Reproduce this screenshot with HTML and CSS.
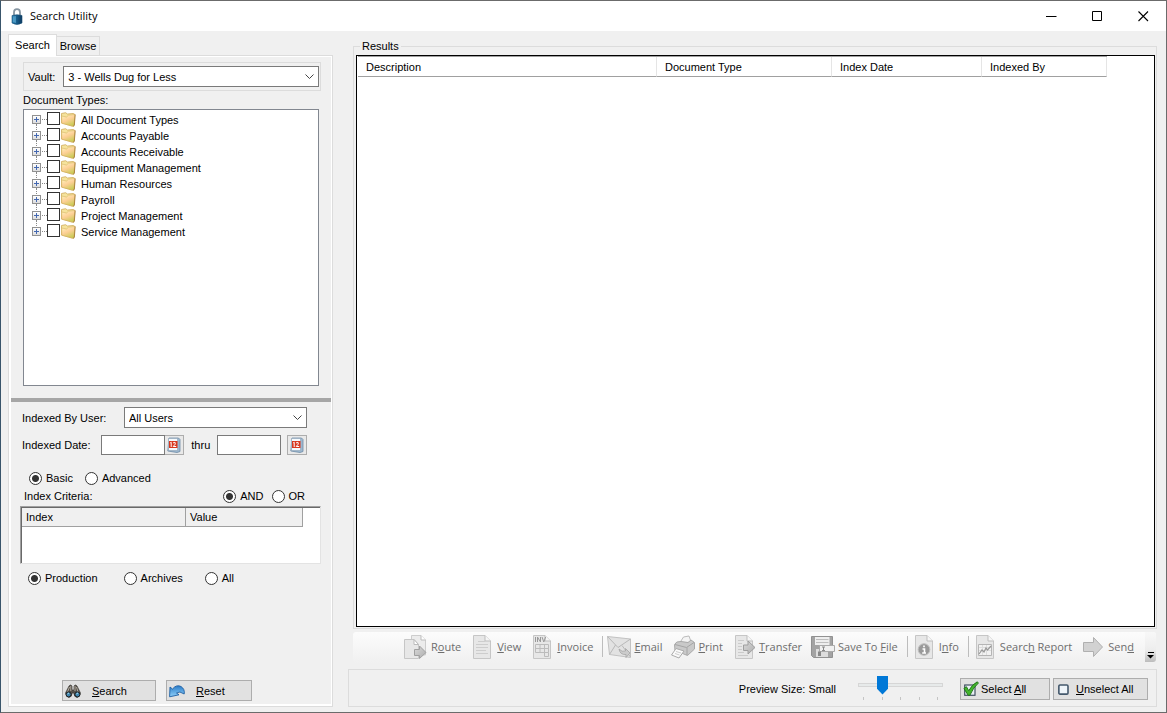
FILE: index.html
```html
<!DOCTYPE html>
<html lang="en">
<head>
<meta charset="utf-8">
<title>Search Utility</title>
<link rel="stylesheet" href="styles.css">
</head>
<body>
<svg class="defs" aria-hidden="true">
  <defs>
    <linearGradient id="g-folder" x1=".1" y1="0" x2=".6" y2="1"><stop offset="0" stop-color="#fff6c0"/><stop offset=".5" stop-color="#fdcf96"/><stop offset="1" stop-color="#c9cc55"/></linearGradient>
    <linearGradient id="g-lock" x1="0" y1="0" x2="1" y2="0"><stop offset="0" stop-color="#2f86b8"/><stop offset=".5" stop-color="#155a88"/><stop offset="1" stop-color="#0e3a60"/></linearGradient>
    <linearGradient id="g-arrow" x1="0" y1="0" x2="0" y2="1"><stop offset="0" stop-color="#2a7cc8"/><stop offset="1" stop-color="#8fd0fa"/></linearGradient>
    <linearGradient id="g-grey" x1="0" y1="0" x2="1" y2="1"><stop offset="0" stop-color="#dadada"/><stop offset="1" stop-color="#adadad"/></linearGradient>
    <symbol id="folder" viewBox="0 0 15 15"><path d="M.5 1.500 4.500.700 6.500 2 12 1.500 13.500 2V12.500L11.500 14.300.5 11Z" fill="#f5e39c" stroke="#c9a04a" stroke-width=".7"/><path d="M.7 4 5.500 5 7.500 3.200 14 2.500 12.800 14.300.7 11.200Z" fill="url(#g-folder)" stroke="#d0aa58" stroke-width=".5"/><path d="M14.200 2.500 13.300 13.500 12 14.300" fill="none" stroke="#a8803c" stroke-width=".9"/></symbol>
    <symbol id="chev" viewBox="0 0 9 6"><path d="M.5.500 4.500 4.500 8.500.500" fill="none" stroke="#444" stroke-width="1"/></symbol>
    <symbol id="cal" viewBox="0 0 14 16"><path d="M2 1H11.500L13 2.500V14.500L10 15.500.8 14Z" fill="#9db8d0" stroke="#6f8ba6" stroke-width=".8"/><path d="M1.500 1.500H10.500V13.500H1.500Z" fill="#f6fafd" stroke="#8aa0b4" stroke-width=".6"/><rect x="2" y="4" width="8.500" height="7" fill="#d8371f"/><path d="M3.200 6 4.200 5.200V10M6 6.200Q7 4.800 8.200 5.600 9.200 6.800 6.200 9.500H9.200" fill="none" stroke="#fff"/></symbol>
    <symbol id="page" viewBox="0 0 18 24"><path d="M.5.500H12L17.500 6V23.500H.5Z" fill="#e7e7e7" stroke="#c6c6c6"/><path d="M12 .5V6H17.500" fill="#f6f6f6" stroke="#bdbdbd"/></symbol>
  </defs>
</svg>
<div class="window">
  <header class="titlebar">
    <svg class="lock" viewBox="0 0 12 17"><path d="M3 8V4.500Q3 1.200 6 1.200T9 4.500V8" fill="none" stroke="#8796a2" stroke-width="1.800"/><path d="M1 7.500Q6 6 11 7.500V15Q6 18 1 15Z" fill="url(#g-lock)" stroke="#174e74" stroke-width=".6"/><path d="M2 8.500 5 8V15L2 14Z" fill="#67b3d8" opacity=".6"/></svg>
    <h1 class="title">Search Utility</h1>
    <div class="controls">
      <button class="ctl" aria-label="Minimize"><svg width="11" height="11"><path d="M0 5.500H10.500" stroke="#000"/></svg></button>
      <button class="ctl" aria-label="Maximize"><svg width="11" height="11"><path d="M.5.500H9.500V9.500H.5Z" fill="none" stroke="#000"/></svg></button>
      <button class="ctl" aria-label="Close"><svg width="11" height="11"><path d="M.5.500 10 10M10 .5.500 10" stroke="#000" stroke-width="1.100"/></svg></button>
    </div>
  </header>
  <main class="work">
    <section class="side">
      <div class="tabs" role="tablist">
        <button class="tab tab-on" role="tab" aria-selected="true">Search</button>
        <button class="tab" role="tab" aria-selected="false">Browse</button>
      </div>
      <form class="panel" onsubmit="return false">
        <div class="upper">
          <div class="vault">
            <label for="vault">Vault:</label>
            <span class="select"><select id="vault"><option>3 - Wells Dug for Less</option></select><svg class="chev"><use href="#chev"/></svg></span>
          </div>
          <div class="caption">Document Types:</div>
          <ul class="tree">
            <li class="node"><button class="plus" aria-label="Expand"></button><input type="checkbox" id="t1"><svg class="folder"><use href="#folder"/></svg><label for="t1">All Document Types</label></li>
            <li class="node"><button class="plus" aria-label="Expand"></button><input type="checkbox" id="t2"><svg class="folder"><use href="#folder"/></svg><label for="t2">Accounts Payable</label></li>
            <li class="node"><button class="plus" aria-label="Expand"></button><input type="checkbox" id="t3"><svg class="folder"><use href="#folder"/></svg><label for="t3">Accounts Receivable</label></li>
            <li class="node"><button class="plus" aria-label="Expand"></button><input type="checkbox" id="t4"><svg class="folder"><use href="#folder"/></svg><label for="t4">Equipment Management</label></li>
            <li class="node"><button class="plus" aria-label="Expand"></button><input type="checkbox" id="t5"><svg class="folder"><use href="#folder"/></svg><label for="t5">Human Resources</label></li>
            <li class="node"><button class="plus" aria-label="Expand"></button><input type="checkbox" id="t6"><svg class="folder"><use href="#folder"/></svg><label for="t6">Payroll</label></li>
            <li class="node"><button class="plus" aria-label="Expand"></button><input type="checkbox" id="t7"><svg class="folder"><use href="#folder"/></svg><label for="t7">Project Management</label></li>
            <li class="node"><button class="plus" aria-label="Expand"></button><input type="checkbox" id="t8"><svg class="folder"><use href="#folder"/></svg><label for="t8">Service Management</label></li>
          </ul>
        </div>
        <div class="lower">
          <div class="row">
            <label class="user-label" for="user">Indexed By User:</label>
            <span class="select"><select id="user"><option>All Users</option></select><svg class="chev"><use href="#chev"/></svg></span>
          </div>
          <div class="row dates">
            <label class="date-label" for="from">Indexed Date:</label>
            <input class="date" type="text" id="from"><button class="cal-btn cal-join" aria-label="Pick start date"><svg class="cal"><use href="#cal"/></svg></button>
            <label class="thru" for="to">thru</label>
            <input class="date" type="text" id="to"><button class="cal-btn cal-apart" aria-label="Pick end date"><svg class="cal"><use href="#cal"/></svg></button>
          </div>
          <div class="radios mode">
            <label class="radio"><input type="radio" name="mode" checked>Basic</label>
            <label class="radio"><input type="radio" name="mode">Advanced</label>
          </div>
          <div class="radios logic">
            <span class="criteria-label">Index Criteria:</span>
            <label class="radio"><input type="radio" name="logic" checked>AND</label>
            <label class="radio"><input type="radio" name="logic">OR</label>
          </div>
          <div class="criteria">
            <table class="criteria-table"><thead><tr><th class="c-index">Index</th><th>Value</th></tr></thead></table>
          </div>
          <div class="radios scope">
            <label class="radio scope-first"><input type="radio" name="scope" checked>Production</label>
            <label class="radio"><input type="radio" name="scope">Archives</label>
            <label class="radio"><input type="radio" name="scope">All</label>
          </div>
          <div class="actions">
            <button class="btn btn-search"><svg class="ico16" viewBox="0 0 16 14"><path d="M4 2Q5.500 0 7 2V6H9V2Q10.500 0 12 2L15.500 9Q15 13 12 13.500 9 13 8.800 9H7.200Q7 13 4 13.500 1 13 .5 9Z" fill="#54504a" stroke="#2f2d2a" stroke-width=".6"/><path d="M4.500 3 2.500 8M11.500 3 13 8M5.800 2V7M10 2V7" stroke="#b3aca0"/><circle cx="3.600" cy="10.400" r="2.500" fill="#3e84ad" stroke="#222"/><circle cx="12.400" cy="10.400" r="2.500" fill="#3e84ad" stroke="#222"/><path d="M2.500 10 4 9M11.300 10 13 9" stroke="#a4d5ec"/></svg><span><u>S</u>earch</span></button>
            <button class="btn btn-reset"><svg class="ico16" viewBox="0 0 16 14"><path d="M1 3 .6 12.800 10 10.800 7.500 9Q10.500 6.500 15.200 10 16 5 12 2.500 7.500.200 3.500 5Z" fill="url(#g-arrow)" stroke="#1d5fa3" stroke-width=".9"/></svg><span><u>R</u>eset</span></button>
          </div>
        </div>
      </form>
    </section>
    <section class="content">
      <fieldset class="results">
        <legend>Results</legend>
        <div class="grid">
          <table class="grid-table"><thead><tr><th class="g-desc">Description</th><th class="g-type">Document Type</th><th class="g-date">Index Date</th><th class="g-by">Indexed By</th></tr></thead></table>
        </div>
      </fieldset>
      <div class="toolbar">
        <div class="tools">
        <button class="tool" disabled><svg class="tico" viewBox="0 0 24 24"><path d="M7.500.500H17L21.500 5V20H7.500Z" fill="#ececec" stroke="#cdcdcd"/><path d="M17 .5V5H21.500" fill="#fff" stroke="#bbb"/><path d="M.5 4.500H10L14.500 9.500V23.500H.5Z" fill="#e7e7e7" stroke="#c6c6c6"/><path d="M10 4.500 14.500 9.500H10Z" fill="#fff" stroke="#bbb"/><path d="M10.500 14.500H15.500V11L22 17.500 15.500 23.500V20.500H10.500Z" fill="url(#g-grey)" stroke="#a0a0a0"/></svg>R<u>o</u>ute</button>
        <button class="tool" disabled><svg class="tico" viewBox="-3 0 24 24"><use href="#page" width="18" height="24"/><path d="M5 6.500H12M3 9.500H15M3 12.500H15M3 15.500H13M3 18.500H15" stroke="#cdcdcd"/></svg><u>V</u>iew</button>
        <button class="tool" disabled><svg class="tico" viewBox="-3 0 24 24"><use href="#page" width="18" height="24"/><path d="M2.500 2V7M4.500 7V2L7.500 7V2M9 2 10.800 7 12.600 2" fill="none" stroke="#999"/><path d="M2.500 9.500H15.500V17.500H2.500ZM2.500 13.500H15.500M7 9.500V17.500M11.500 9.500V21.500H15.500V17.500" fill="none" stroke="#bcbcbc"/></svg><u>I</u>nvoice</button>
        <span class="sep"></span>
        <button class="tool" disabled><svg class="tico" viewBox="0 0 24 24"><path d="M.5 1.500 23.500 4V22.500L2.500 19.500Z" fill="#e2e2e2" stroke="#c2c2c2"/><path d="M.5 1.500 11 12.500 23.500 4M2.500 19.500 8.500 10M23.500 22 15 10.500" fill="none" stroke="#b8b8b8"/><path d="M12 14Q15 17.500 18.500 16V13.500L23 18 19 22.500V19.500Q13 20 12 14Z" fill="#ccc" stroke="#a4a4a4" stroke-width=".8"/></svg><u>E</u>mail</button>
        <button class="tool" disabled><svg class="tico" viewBox="0 0 24 24"><path d="M9 7.500 12.500 2 18 1 20.500 8Z" fill="#f4f4f4" stroke="#bcbcbc"/><path d="M3.500 9.500Q5 6 10 6.500L17 7.500 20 5 23.500 7.500V14L16.500 20.500 4 15.500Z" fill="#c9c9c9" stroke="#a9a9a9"/><path d="M4 9.500 15.500 12.500 23 7.500M16 12.500V20" fill="none" stroke="#a5a5a5"/><path d="M5 13.500 13 16 8 23 .5 20Z" fill="#fafafa" stroke="#aaa"/><path d="M5 16.500 10 18M4 18.500 8.500 20" stroke="#ccc"/></svg><u>P</u>rint</button>
        <button class="tool" disabled><svg class="tico" viewBox="-3 0 24 24"><use href="#page" width="18" height="24"/><path d="M3 5.500H9M3 8.500H7M3 11.500H7M3 14.500H7M3 17.500H9M3 20.500H13" stroke="#cbcbcb"/><path d="M8.500 10H13V6L20 12.500 13 19V15.500H8.500Z" fill="url(#g-grey)" stroke="#9e9e9e"/></svg><u>T</u>ransfer</button>
        <button class="tool" disabled><svg class="tico" viewBox="0 0 24 24"><path d="M.5 1.500H21.500V22.500H2.500L.5 20.500Z" fill="#a3a3a3" stroke="#919191"/><path d="M4 2H18.500V10H4Z" fill="#eee"/><path d="M5 4.500H17.500M5 7.500H17.500" stroke="#bebebe"/><path d="M5 14H17V22H5Z" fill="#ddd"/><path d="M8.500 10.500H23.500V16.500H8.500Z" fill="#f0f0f0" stroke="#aaa"/><path d="M11 12H14M12.500 12V15.500M11 15.500H14" stroke="#888"/><path d="M7 16.500H10V21H7Z" fill="#888"/></svg>Save To <u>F</u>ile</button>
        <span class="sep"></span>
        <button class="tool" disabled><svg class="tico" viewBox="-3 0 24 24"><use href="#page" width="18" height="24"/><circle cx="9" cy="14.500" r="5.800" fill="#999" stroke="#bdbdbd"/><path d="M9 10.500V12.200M7.500 14H9.500V18M7.200 18H11" fill="none" stroke="#fff" stroke-width="1.600"/></svg>I<u>n</u>fo</button>
        <span class="sep"></span>
        <button class="tool" disabled><svg class="tico" viewBox="-3 0 24 24"><use href="#page" width="18" height="24"/><path d="M2.500 9.500H15.500V20.500H2.500Z" fill="#f2f2f2" stroke="#b5b5b5"/><path d="M3 12.500H15M3 15.500H15M6.500 10V20M10.500 10V20" stroke="#ddd"/><path d="M3 19 6 15 8 17 10 13 11.500 15 15 11" fill="none" stroke="#999" stroke-width="1.200"/></svg>Searc<u>h</u> Report</button>
        <button class="tool" disabled><svg class="tico" viewBox="-2 0 24 24"><path d="M.5 7.500H10.500V2.500L19.500 12 10.500 21.500V16.500H.5Z" fill="#d2d2d2" stroke="#b0b0b0"/></svg>Sen<u>d</u></button>
        </div>
        <button class="overflow" aria-label="More tools"><svg width="7" height="7"><path d="M1 .5H7" stroke="#000"/><path d="M0 3H7L3.500 6.500Z" fill="#000"/></svg></button>
      </div>
      <footer class="preview">
        <label class="preview-label" for="size">Preview Size: Small</label>
        <span class="slider"><input type="range" id="size" min="0" max="4" value="1"><svg class="ticks" viewBox="0 0 85 4" preserveAspectRatio="none"><path d="M5.500 0V3M24.500 0V3M42.500 0V3M61.500 0V3M79.500 0V3" stroke="#c4c4c4"/></svg></span>
        <button class="btn btn-select"><svg class="ico14" viewBox="0 0 14 14"><rect x="1.500" y="3.500" width="9" height="9" fill="#e8eef4" stroke="#3c4c5c"/><path d="M.8 6.500 3 5 5 8.500Q8 3 12.500.700L13.500 1.800Q9 5.500 6 12.500H4.500Z" fill="#43b52c" stroke="#1c6e14" stroke-width=".8"/></svg><span>Select <u>A</u>ll</span></button>
        <button class="btn btn-unselect"><svg class="ico14" viewBox="0 0 14 14"><rect x="2.500" y="3.500" width="8" height="8" rx="1" fill="#eef4f9" stroke="#44586c" stroke-width="1.400"/></svg><span><u>U</u>nselect All</span></button>
      </footer>
    </section>
  </main>
</div>
</body>
</html>
```

FILE: styles.css
```css
* { box-sizing: border-box; }
body {
  margin: 0;
  background: #f0f0f0;
  color: #000;
  font: 11px/16px "Liberation Sans", Arial, sans-serif;
}
button, input, select { font: inherit; color: inherit; margin: 0; padding: 0; border-radius: 0; }
.defs { position: absolute; width: 0; height: 0; }

.window {
  display: flex;
  flex-direction: column;
  min-height: 100vh;
  border: 1px solid #6b6b6b;
  border-left-color: #39556b;
}
.titlebar { display: flex; align-items: center; height: 30px; padding-left: 10px; background: #fff; }
.lock { width: 12px; height: 17px; }
.title { margin: 0 0 0 7px; font: 11px/16px "Open Sans", sans-serif; }
.controls { display: flex; align-self: stretch; margin-left: auto; }
.ctl { display: flex; align-items: center; justify-content: center; width: 46px; border: 0; background: none; }

.work { display: flex; flex: 1; gap: 15px; padding: 3px 9px 5px 7px; }
.side { display: flex; flex-direction: column; width: 325px; flex: none; }
.tabs { display: flex; align-items: flex-end; height: 21px; }
.tab { height: 19px; width: 43px; border: 1px solid #dcdcdc; border-left: 0; border-bottom: 0; background: #f0f0f0; }
.tab-on { position: relative; z-index: 1; height: 22px; width: 49px; margin-bottom: -1px; padding-bottom: 1px; border-left: 1px solid #dcdcdc; background: #fff; }
.panel { display: flex; flex-direction: column; flex: 1; padding: 1px 1px 2px 2px; border: 1px solid #dcdcdc; background: #fff; }

.upper { display: flex; flex-direction: column; flex: 1; padding: 5px 10px 12px 12px; background: #f0f0f0; }
.vault { display: flex; align-items: center; gap: 8px; height: 29px; padding: 0 1px 0 4px; border: 1px solid #dcdcdc; }
.select { display: grid; flex: 1; align-items: center; }
.select > * { grid-area: 1 / 1; }
.select select { appearance: none; width: 100%; height: 21px; padding-left: 4px; border: 1px solid #7a7a7a; background: #fff; }
.chev { justify-self: end; width: 9px; height: 6px; margin-right: 5px; pointer-events: none; }
.caption { padding: 1px 0; }
.tree { flex: 1; margin: 0 2px 0 0; padding: 2px 0 0 8px; border: 1px solid #828790; background: #fff; list-style: none; }
.node { display: flex; height: 16px; position: relative; }
.node::before { content: ""; position: absolute; left: 4px; top: 12px; height: 8px; border-left: 1px dotted #888; }
.node:last-child::before { display: none; }
.node::after { content: ""; position: absolute; left: 10px; top: 7px; width: 5px; border-top: 1px dotted #888; }
.plus {
  width: 9px; height: 9px; margin: 3px 6px 0 0; border: 1px solid #919191;
  background: linear-gradient(#4468b0, #4468b0) center / 5px 1px no-repeat, linear-gradient(#4468b0, #4468b0) center / 1px 5px no-repeat, linear-gradient(#fff, #ddd);
}
.node input { appearance: none; width: 13px; height: 13px; border: 1px solid #333; background: #fff; }
.folder { width: 15px; height: 15px; margin: 0 5px 0 1px; }

.lower { padding: 5px 10px 3px 9px; border-top: 4px solid #a6a6a6; background: #f0f0f0; }
.row { display: flex; align-items: center; padding: 0 14px 0 2px; }
.user-label { width: 102px; }
.dates { margin-top: 7px; }
.date-label { width: 80px; }
.date { width: 64px; height: 20px; border: 1px solid #7a7a7a; background: #fff; }
.cal-btn { display: flex; align-items: center; justify-content: center; width: 20px; height: 20px; border: 1px solid #adadad; background: #e9e9e9; }
.cal-join { width: 19px; border-left: 0; }
.cal-apart { margin-left: 6px; }
.cal { width: 14px; height: 16px; }
.thru { width: 33px; padding-left: 7px; }
.radios { display: flex; align-items: center; }
.radio { display: flex; align-items: center; gap: 4px; }
.radio input { appearance: none; width: 13px; height: 13px; border: 1px solid #333; border-radius: 50%; background: #fff; }
.radio input:checked { background: radial-gradient(circle, #333 3px, #fff 4px); }
.mode { gap: 12px; margin-top: 15px; padding-left: 9px; }
.logic { gap: 8px; margin-top: 2px; padding: 0 16px 0 4px; }
.criteria-label { margin-right: auto; }
.criteria { height: 58px; margin-top: 2px; border: 1px solid #a0a0a0; border-color: #a0a0a0 #e3e3e3 #e3e3e3 #a0a0a0; box-shadow: inset 1px 1px #696969; background: #fff; padding: 1px; }
table { border-collapse: separate; border-spacing: 0; table-layout: fixed; }
th { padding: 0; text-align: left; font-weight: normal; }
.criteria-table { width: 281px; }
.criteria-table th { height: 19px; padding-left: 4px; background: #f0f0f0; border-right: 1px solid #a0a0a0; border-bottom: 1px solid #a0a0a0; }
.criteria-table .c-index { width: 164px; }
.scope { gap: 22px; margin-top: 6px; padding-left: 8px; }
.scope-first { margin-right: 4px; }
.actions { display: flex; gap: 10px; margin-top: 94px; padding-left: 42px; }
.btn { display: flex; align-items: center; height: 22px; padding: 0 4px 0 2px; border: 1px solid #adadad; background: #e1e1e1; }
.actions .btn { gap: 11px; height: 21px; }
.btn-search { width: 94px; }
.btn-reset { width: 86px; }
.ico16 { width: 16px; height: 14px; }

.content { display: flex; flex-direction: column; flex: 1; min-width: 0; }
.results { display: flex; flex-direction: column; flex: 1; min-width: 0; margin: 4px 0 0 5px; padding: 0 1px 1px 2px; border: 1px solid #dcdcdc; }
.results legend { height: 17px; margin-left: 4px; padding: 0 2px; }
.grid { flex: 1; height: 100%; border: 1px solid #000; background: #fff; padding: 0 1px; }
.grid-table { width: 749px; border-top: 1px solid #a0a0a0; }
.grid-table th { height: 20px; padding-left: 8px; border-right: 1px solid #e5e5e5; border-bottom: 1px solid #a0a0a0; }
.g-desc { width: 299px; }
.g-type { width: 175px; }
.g-date { width: 150px; }
.toolbar { display: flex; margin: 3px 1px 0 5px; height: 31px; background: linear-gradient(#fcfcfc, #f0f0f0); border-radius: 3px; }
.tools { display: flex; flex: 1; align-items: center; justify-content: flex-end; gap: 9px; padding: 0 11px 2px 0; }
.tool { display: flex; align-items: center; height: 24px; border: 0; background: none; color: #6d6d6d; font: 11px/16px "Open Sans", sans-serif; white-space: pre; }
.tico { width: 24px; height: 24px; margin-right: 3px; }
.sep { width: 1px; height: 21px; margin-right: -5px; background: #bdbdbd; }
.overflow { display: flex; align-items: flex-end; justify-content: center; width: 11px; margin-bottom: 1px; padding-bottom: 3px; border: 0; border-radius: 0 3px 3px 0; background: linear-gradient(#f8f8f8, #ededed 60%, #bcbcbc); }
.preview { display: flex; align-items: center; justify-content: flex-end; height: 38px; margin-top: 6px; padding: 2px 8px 0; border: 1px solid #dcdcdc; }
.slider { display: flex; flex-direction: column; width: 85px; margin: 0 17px 2px 22px; }
.slider input { appearance: none; width: 100%; height: 19px; background: none; }
.slider input::-webkit-slider-runnable-track { height: 4px; border: 1px solid #d6d6d6; background: #e7eaea; }
.slider input::-webkit-slider-thumb { appearance: none; width: 11px; height: 19px; margin-top: -8px; background: #0078d7; clip-path: polygon(0 0, 100% 0, 100% 70%, 50% 100%, 0 70%); }
.ticks { width: 100%; height: 4px; margin-top: 3px; }
.btn-select { width: 90px; margin-right: 3px; gap: 2px; }
.btn-unselect { width: 95px; gap: 4px; }
.btn-select span, .btn-unselect span { white-space: nowrap; }
.ico14 { width: 16px; height: 16px; }
.actions span, .btn-select span { text-align: left; }
```
